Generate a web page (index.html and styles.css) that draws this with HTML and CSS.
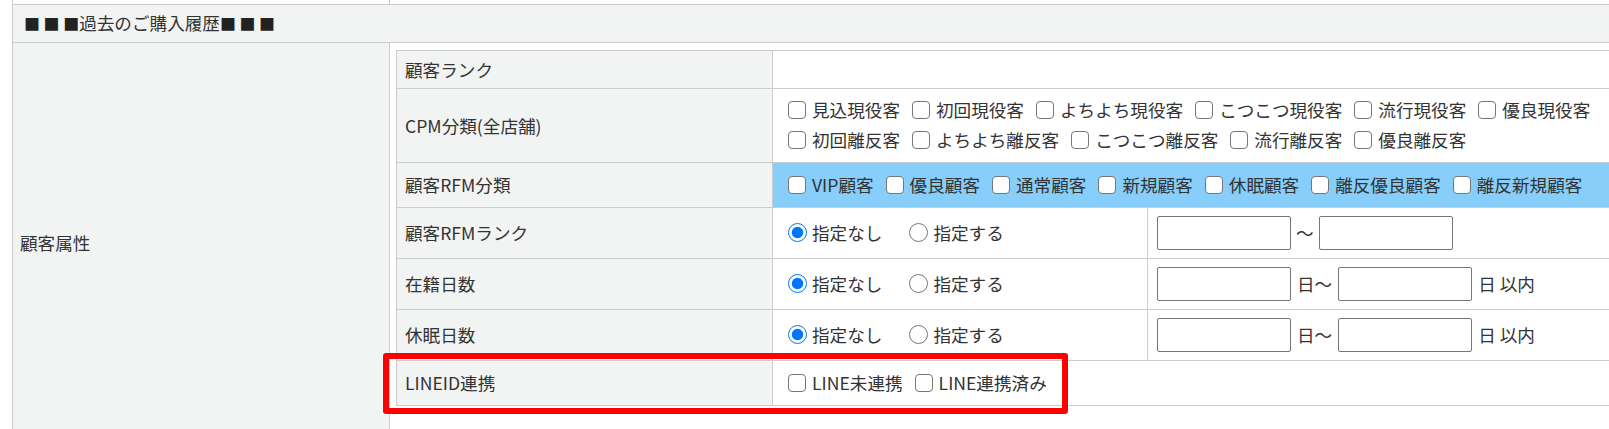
FILE: index.html
```html
<!DOCTYPE html>
<html lang="ja">
<head>
  <meta charset="UTF-8" />
  <title>顧客検索</title>
  <link rel="stylesheet" href="styles.css">
</head>
<body>
  <div class="page">
    <table class="outer">
      <colgroup>
        <col class="c-attr">
        <col>
      </colgroup>
      <tr class="prev"><td></td><td></td></tr>
      <tr>
        <th colspan="2" class="section"><span class="marks">■ ■ ■</span>過去のご購入履歴<span class="marks">■ ■ ■</span></th>
      </tr>
      <tr>
        <th class="attr">顧客属性</th>
        <td class="attr-body">
          <table class="detail">
            <colgroup>
              <col class="c-label">
              <col class="c-value">
              <col>
            </colgroup>
            <tr class="r-rank">
              <th>顧客ランク</th>
              <td colspan="2"></td>
            </tr>
            <tr class="r-cpm">
              <th>CPM分類(全店舗)</th>
              <td colspan="2">
                <div class="opts">
                  <label class="opt"><input type="checkbox">見込現役客</label>
                  <label class="opt"><input type="checkbox">初回現役客</label>
                  <label class="opt"><input type="checkbox">よちよち現役客</label>
                  <label class="opt"><input type="checkbox">こつこつ現役客</label>
                  <label class="opt"><input type="checkbox">流行現役客</label>
                  <label class="opt"><input type="checkbox">優良現役客</label>
                  <label class="opt"><input type="checkbox">初回離反客</label>
                  <label class="opt"><input type="checkbox">よちよち離反客</label>
                  <label class="opt"><input type="checkbox">こつこつ離反客</label>
                  <label class="opt"><input type="checkbox">流行離反客</label>
                  <label class="opt"><input type="checkbox">優良離反客</label>
                </div>
              </td>
            </tr>
            <tr class="r-rfm">
              <th>顧客RFM分類</th>
              <td colspan="2" class="rfm">
                <div class="opts">
                  <label class="opt"><input type="checkbox">VIP顧客</label>
                  <label class="opt"><input type="checkbox">優良顧客</label>
                  <label class="opt"><input type="checkbox">通常顧客</label>
                  <label class="opt"><input type="checkbox">新規顧客</label>
                  <label class="opt"><input type="checkbox">休眠顧客</label>
                  <label class="opt"><input type="checkbox">離反優良顧客</label>
                  <label class="opt"><input type="checkbox">離反新規顧客</label>
                </div>
              </td>
            </tr>
            <tr class="r-range">
              <th>顧客RFMランク</th>
              <td>
                <div class="radios">
                  <label class="opt"><input type="radio" name="rfmrank" checked>指定なし</label>
                  <label class="opt"><input type="radio" name="rfmrank">指定する</label>
                </div>
              </td>
              <td>
                <div class="range">
                  <input type="text" class="num">
                  <span class="tilde">～</span>
                  <input type="text" class="num">
                </div>
              </td>
            </tr>
            <tr class="r-range">
              <th>在籍日数</th>
              <td>
                <div class="radios">
                  <label class="opt"><input type="radio" name="zaiseki" checked>指定なし</label>
                  <label class="opt"><input type="radio" name="zaiseki">指定する</label>
                </div>
              </td>
              <td>
                <div class="range">
                  <input type="text" class="num">
                  <span>日～</span>
                  <input type="text" class="num">
                  <span>日 以内</span>
                </div>
              </td>
            </tr>
            <tr class="r-range">
              <th>休眠日数</th>
              <td>
                <div class="radios">
                  <label class="opt"><input type="radio" name="kyumin" checked>指定なし</label>
                  <label class="opt"><input type="radio" name="kyumin">指定する</label>
                </div>
              </td>
              <td>
                <div class="range">
                  <input type="text" class="num">
                  <span>日～</span>
                  <input type="text" class="num">
                  <span>日 以内</span>
                </div>
              </td>
            </tr>
            <tr class="r-line">
              <th>LINEID連携</th>
              <td colspan="2">
                <div class="opts">
                  <label class="opt"><input type="checkbox">LINE未連携</label>
                  <label class="opt"><input type="checkbox">LINE連携済み</label>
                </div>
              </td>
            </tr>
          </table>
        </td>
      </tr>
    </table>

    <!-- annotation around the LINE row -->
    <div class="highlight"></div>
  </div>
</body>
</html>
```

FILE: styles.css
```css
* {
  box-sizing: border-box;
}

body {
  margin: 0;
  font-family: "Noto Sans CJK JP", sans-serif;
  font-size: 17.6px;
  color: #333;
  background: #fff;
  overflow: hidden;
}

.page {
  position: relative;
  width: 1660px;
  padding-left: 12px;
}

/* outer table */
.outer {
  border-collapse: collapse;
  table-layout: fixed;
  width: 1640px;
}

.outer > tbody > tr > td,
.outer > tbody > tr > th {
  border: 1px solid #ccc;
  font-weight: normal;
  text-align: left;
}

.c-attr {
  width: 377px;
}

.outer .prev td {
  height: 4px;
  padding: 0;
  border-top: none;
}

.section {
  height: 38px;
  padding: 0 11px;
  background: #f2f3f3;
  line-height: 1;
}

.marks {
  font-size: 16px;
  color: #222;
}

.attr {
  padding: 0 7px;
  background: #f2f3f3;
  vertical-align: middle;
}

.attr-body {
  padding: 7px 6px 37px 6px;
  vertical-align: top;
}

/* inner table */
.detail {
  border-collapse: collapse;
  table-layout: fixed;
  width: 100%;
}

.c-label {
  width: 376px;
}

.c-value {
  width: 375px;
}

.detail th,
.detail td {
  border: 1px solid #ccc;
  vertical-align: middle;
}

.detail th {
  padding: 0 8px;
  background: #f2f3f3;
  font-weight: normal;
  text-align: left;
}

.detail td {
  padding: 0 10px 0 15px;
}

.r-rank th { height: 38px; }
.r-cpm th { height: 74px; }
.r-rfm th { height: 45px; }
.r-range th { height: 51px; }
.r-line th { height: 45px; }

.detail td.rfm {
  background: #87cefa;
}

.opts {
  display: flex;
  flex-wrap: wrap;
  column-gap: 12px;
}

.opt {
  display: inline-flex;
  align-items: center;
  gap: 6px;
  line-height: 30px;
  white-space: nowrap;
}

.opt input[type="checkbox"] {
  appearance: none;
  width: 18px;
  height: 18px;
  margin: 0;
  border: 1px solid #767676;
  border-radius: 4px;
  background: #fff;
}

.opt input[type="radio"] {
  width: 19px;
  height: 19px;
  margin: 0;
}

.radios {
  display: flex;
  gap: 27px;
}

.radios .opt {
  gap: 5px;
}

.r-range td:last-child {
  padding-left: 9px;
}

.range {
  display: flex;
  align-items: center;
  gap: 6px;
}

.num {
  width: 134px;
  height: 34px;
  border: 1px solid #767676;
  border-radius: 2px;
  font: inherit;
}

.tilde {
  margin: 0 -1px;
}

/* red annotation box */
.highlight {
  position: absolute;
  left: 383px;
  top: 353px;
  width: 685px;
  height: 61px;
  border: 6px solid #ff0000;
  border-radius: 3px;
}
```
